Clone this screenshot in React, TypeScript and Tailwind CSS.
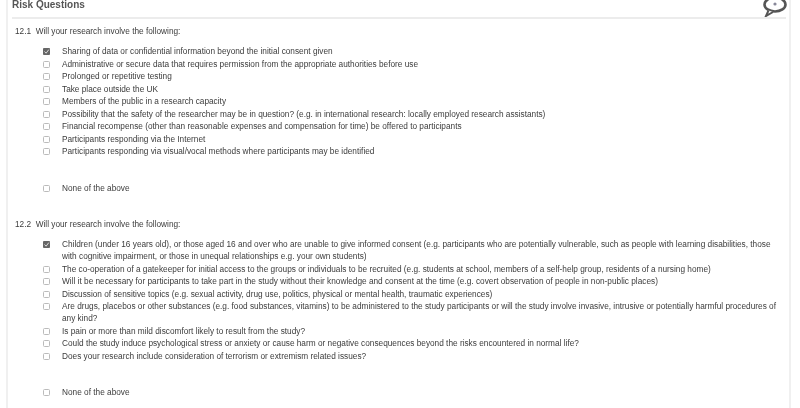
import { Fragment } from "react";

const firstItems = [
  "Sharing of data or confidential information beyond the initial consent given",
  "Administrative or secure data that requires permission from the appropriate authorities before use",
  "Prolonged or repetitive testing",
  "Take place outside the UK",
  "Members of the public in a research capacity",
  "Possibility that the safety of the researcher may be in question? (e.g. in international research: locally employed research assistants)",
  "Financial recompense (other than reasonable expenses and compensation for time) be offered to participants",
  "Participants responding via the Internet",
  "Participants responding via visual/vocal methods where participants may be identified",
];

const secondItems = [
  "Children (under 16 years old), or those aged 16 and over who are unable to give informed consent (e.g. participants who are potentially vulnerable, such as people with learning disabilities, those with cognitive impairment, or those in unequal relationships e.g. your own students)",
  "The co-operation of a gatekeeper for initial access to the groups or individuals to be recruited (e.g. students at school, members of a self-help group, residents of a nursing home)",
  "Will it be necessary for participants to take part in the study without their knowledge and consent at the time (e.g. covert observation of people in non-public places)",
  "Discussion of sensitive topics (e.g. sexual activity, drug use, politics, physical or mental health, traumatic experiences)",
  "Are drugs, placebos or other substances (e.g. food substances, vitamins) to be administered to the study participants or will the study involve invasive, intrusive or potentially harmful procedures of any kind?",
  "Is pain or more than mild discomfort likely to result from the study?",
  "Could the study induce psychological stress or anxiety or cause harm or negative consequences beyond the risks encountered in normal life?",
  "Does your research include consideration of terrorism or extremism related issues?",
];

const CheckBox = ({ checked }: { checked?: boolean }) => (
  <span className="mt-[2px] flex h-[7px] w-[7px] shrink-0 items-center justify-center rounded-[1.5px] border border-[#bbb] bg-white">
    {checked && (
      <svg viewBox="0 0 7 7" className="h-[7px] w-[7px] shrink-0">
        <rect width="7" height="7" rx="1" fill="#666" />
        <path d="M1.5 3.5l1.6 1.7L5.8 1.6" fill="none" stroke="#ddd" strokeWidth="1" />
      </svg>
    )}
  </span>
);

const Row = ({ text, checked }: { text: string; checked?: boolean }) => (
  <div className="flex gap-[12px] pb-[0.5px] pl-[43px] leading-[12px]">
    <CheckBox checked={checked} />
    <span className="w-[716px]">{text}</span>
  </div>
);

const Question = ({ num, items }: { num: string; items: string[] }) => (
  <Fragment>
    <div className="pl-[15px] leading-[12px]">{num}&nbsp; Will your research involve the following:</div>
    <div className="mt-[8px] flex flex-col">
      {items.map((text, i) => (
        <Row key={text} text={text} checked={i === 0} />
      ))}
    </div>
    <div className="mt-[24px]">
      <Row text="None of the above" />
    </div>
  </Fragment>
);

export default function App() {
  return (
    <div className="h-[408px] w-[800px] overflow-hidden bg-white font-['Liberation_Sans',sans-serif] text-[8.27px] text-[#3c3c3c] blur-[0.55px]">
      <div className="mx-[6px] h-full w-[785px] border-x-2 border-[#f0f0f0]">
        <div className="relative mx-[4px] flex h-[19px] w-[774px] items-start border-b-2 border-[#ececec]">
          <h2 className="text-[10px] leading-[9px] font-bold text-[#555]">Risk Questions</h2>
          <svg viewBox="0 0 26 20" className="absolute -top-[3px] right-[-2px] h-[20px] w-[26px]">
            <ellipse cx="13" cy="7.5" rx="10.5" ry="7" fill="#fff" stroke="#555" strokeWidth="2.6" />
            <path d="M6.5 13.5L4 19l7-4" fill="#fff" stroke="#555" strokeWidth="2" />
            <circle cx="13" cy="7" r="1.6" fill="#889" />
          </svg>
        </div>
        <div className="-ml-[8px] pt-[7px]">
          <Question num="12.1" items={firstItems} />
          <div className="h-[24px]" />
          <Question num="12.2" items={secondItems} />
        </div>
      </div>
    </div>
  );
}
